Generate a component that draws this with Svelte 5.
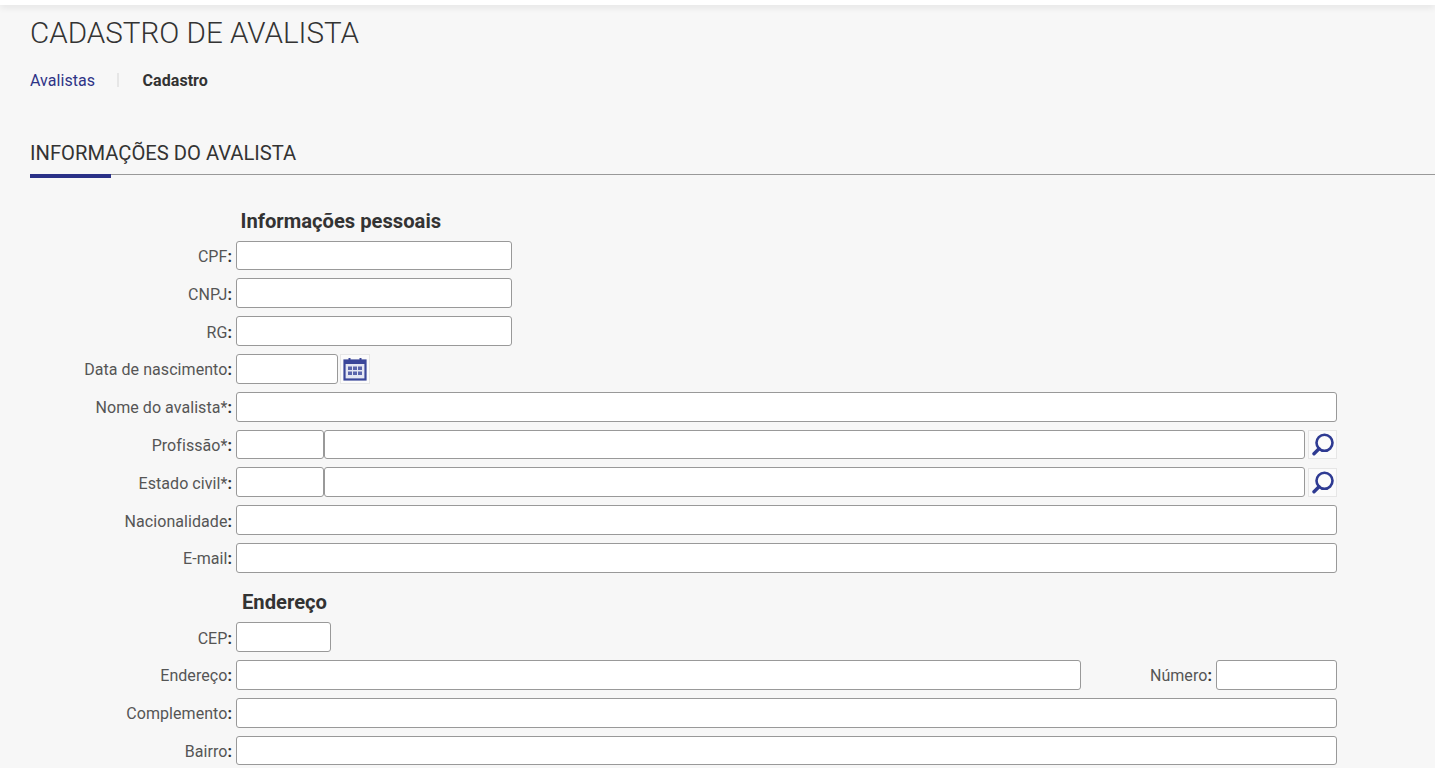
<script>
  const personal = [
    { label: 'CPF', kind: 'short' },
    { label: 'CNPJ', kind: 'short' },
    { label: 'RG', kind: 'short' },
    { label: 'Data de nascimento', kind: 'date' },
    { label: 'Nome do avalista*', kind: 'full' },
    { label: 'Profissão*', kind: 'lookup' },
    { label: 'Estado civil*', kind: 'lookup' },
    { label: 'Nacionalidade', kind: 'full' },
    { label: 'E-mail', kind: 'full' }
  ];
</script>

{#snippet calendarIcon()}
  <svg viewBox="0 0 24 24" width="24" height="24" aria-hidden="true">
    <path d="M6.5 1v4M17.5 1v4" stroke="#3a4699" stroke-width="2" fill="none" />
    <rect x="1.5" y="3.5" width="21" height="19" fill="#e4e6f3" stroke="#3a4699" stroke-width="2.2" />
    <rect x="1.5" y="3.5" width="21" height="3.5" fill="#3a4699" />
    <path d="M5 9.5h4v3.5H5zM10 9.5h4v3.5h-4zM15 9.5h4v3.5h-4zM5 14.5h4V18H5zM10 14.5h4V18h-4zM15 14.5h4V18h-4z" fill="#5a65ac" />
  </svg>
{/snippet}

{#snippet searchIcon()}
  <svg viewBox="0 0 24 24" width="24" height="24" aria-hidden="true">
    <circle cx="13.5" cy="10.8" r="8" fill="none" stroke="#2e3a92" stroke-width="2.6" />
    <path d="M8 16.8 3 21.8" stroke="#2e3a92" stroke-width="3.4" stroke-linecap="round" fill="none" />
  </svg>
{/snippet}

<div class="topbar"></div>

<main>
  <h1>CADASTRO DE AVALISTA</h1>

  <nav class="crumbs">
    <a href="#avalistas">Avalistas</a>
    <span class="sep"></span>
    <strong>Cadastro</strong>
  </nav>

  <div class="section-title">
    <h2>INFORMAÇÕES DO AVALISTA</h2>
  </div>

  <form>
    <h3 class="first">Informações pessoais</h3>
    {#each personal as field}
      <div class="row">
        <span class="label">{field.label}<b>:</b></span>
        {#if field.kind === 'short'}
          <input class="w-short" type="text" />
        {:else if field.kind === 'date'}
          <input class="w-date" type="text" />
          <button type="button" class="icon-btn date-btn">{@render calendarIcon()}</button>
        {:else if field.kind === 'lookup'}
          <input class="w-code" type="text" />
          <input class="grow" type="text" />
          <button type="button" class="icon-btn">{@render searchIcon()}</button>
        {:else}
          <input class="grow" type="text" />
        {/if}
      </div>
    {/each}

    <h3 class="second">Endereço</h3>
    <div class="row">
      <span class="label">CEP<b>:</b></span>
      <input class="w-cep" type="text" />
    </div>
    <div class="row">
      <span class="label">Endereço<b>:</b></span>
      <input class="w-street" type="text" />
      <span class="inline-label">Número<b>:</b></span>
      <input class="grow" type="text" />
    </div>
    <div class="row">
      <span class="label">Complemento<b>:</b></span>
      <input class="grow" type="text" />
    </div>
    <div class="row">
      <span class="label">Bairro<b>:</b></span>
      <input class="grow" type="text" />
    </div>
  </form>
</main>

<style>
  :global(body) {
    margin: 0;
    background: #f7f7f7;
    font-family: Roboto, "Liberation Sans", sans-serif;
    color: #333;
    overflow: hidden;
  }

  .topbar {
    height: 5px;
    background: #fff;
    box-shadow: 0 2px 7px rgba(0, 0, 0, 0.1);
  }

  main {
    padding-left: 30px;
  }

  h1 {
    margin: 0;
    padding-top: 10px;
    font-size: 29.6px;
    line-height: 36px;
    font-weight: 300;
    color: #333;
  }

  .crumbs {
    display: flex;
    align-items: center;
    height: 20px;
    margin-top: 19px;
    font-size: 16px;
    letter-spacing: 0.05px;
  }

  .crumbs a {
    color: #2e3386;
    text-decoration: none;
  }

  .sep {
    width: 2px;
    height: 14px;
    background: #e6e6e6;
    margin: 0 23.5px 0 22px;
  }

  .crumbs strong {
    font-weight: 700;
    color: #333;
  }

  .section-title {
    margin-top: 51px;
    border-bottom: 1px solid #999;
    height: 33px;
    position: relative;
  }

  .section-title::after {
    content: '';
    position: absolute;
    left: 0;
    bottom: -4px;
    width: 81px;
    height: 4px;
    background: #2a3187;
  }

  h2 {
    margin: 0;
    font-size: 20.2px;
    line-height: 24px;
    font-weight: 400;
    color: #333;
  }

  form {
    width: 1307px;
  }

  h3 {
    margin: 0;
    font-size: 20.2px;
    line-height: 24px;
    font-weight: 700;
    color: #333;
  }

  h3.first {
    margin: 33.6px 0 8px 210.5px;
  }

  h3.second {
    margin: 17.4px 0 8px 212px;
  }

  .row {
    display: flex;
    align-items: center;
    height: 29.8px;
    margin-bottom: 8px;
  }

  .label {
    flex: none;
    width: 206px;
    padding: 2px 4px 0 0;
    box-sizing: border-box;
    text-align: right;
    font-size: 16px;
    letter-spacing: 0.06px;
    color: #555;
    white-space: nowrap;
  }

  .label b,
  .inline-label b {
    font-weight: 700;
    color: #333;
  }

  .inline-label {
    flex: none;
    width: 135px;
    padding: 2px 4px 0 0;
    box-sizing: border-box;
    text-align: right;
    font-size: 16px;
    letter-spacing: 0.06px;
    color: #555;
  }

  input {
    box-sizing: border-box;
    height: 29.8px;
    margin: 0;
    border: 1px solid #999;
    border-radius: 3px;
    background: #fff;
    padding: 0 4px;
    min-width: 0;
    flex: none;
  }

  .grow { flex: 1; }
  .w-short { width: 276px; }
  .w-date { width: 102px; }
  .w-code { width: 88px; }
  .w-cep { width: 95px; }
  .w-street { width: 845px; }

  .icon-btn {
    flex: none;
    box-sizing: border-box;
    width: 29px;
    height: 29px;
    margin-left: 3px;
    padding: 0;
    display: flex;
    align-items: center;
    justify-content: center;
    background: #fbfbfb;
    border: 1px solid #e6e6e6;
  }

  .date-btn {
    width: 30px;
    height: 30px;
    margin-left: 2px;
  }
</style>
